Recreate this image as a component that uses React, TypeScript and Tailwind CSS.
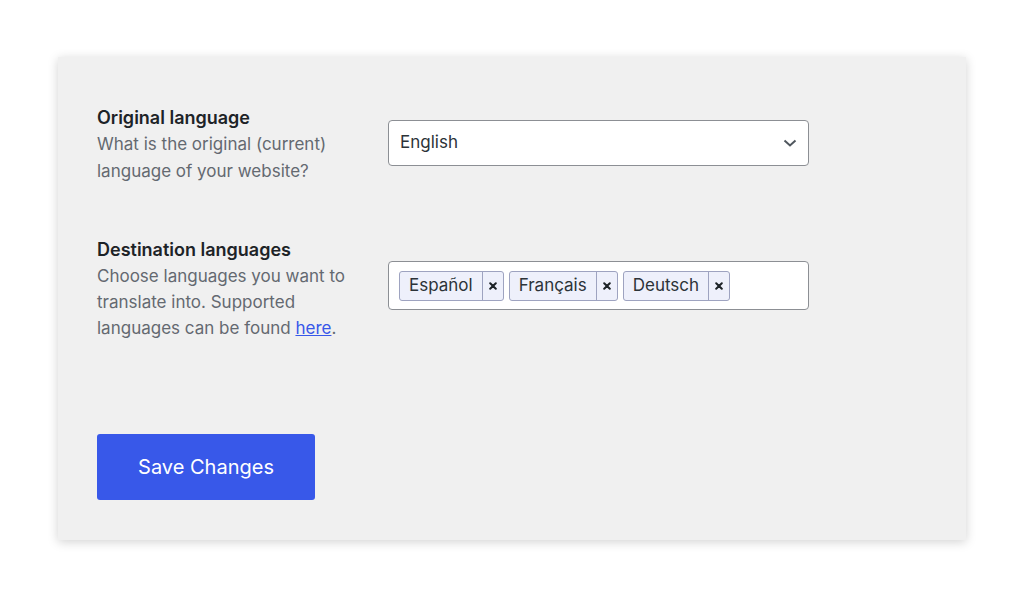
import React from "react";

function Tag({ label }: { label: string }) {
  return (
    <div className="flex h-[30px] items-stretch rounded-[3px] border border-[#9ea3c0] bg-[#eef0fb] text-[17px] text-[#2c3338]">
      <span className="flex items-center px-[9px]">{label}</span>
      <span className="flex w-[21px] items-center justify-center border-l border-[#9ea3c0]">
        <svg width="8" height="8" viewBox="0 0 8 8">
          <path d="M1.2 1.2 L6.8 6.8 M6.8 1.2 L1.2 6.8" stroke="#1d2327" strokeWidth="2" strokeLinecap="round" />
        </svg>
      </span>
    </div>
  );
}

export default function App() {
  return (
    <div className="h-[592px] w-[1024px] bg-white" style={{ fontFamily: "Inter, 'Noto Sans', sans-serif" }}>
      <div className="pl-[58px] pt-[57px]">
        <div className="h-[483px] w-[908px] bg-[#f0f0f0] pl-[39px] pt-[47px] shadow-[0_2px_10px_rgba(0,0,0,0.18)]">
          <div className="flex">
            <div className="w-[291px]">
              <div className="text-[18px] font-semibold leading-[27px] text-[#1d2327]">Original language</div>
              <div className="text-[17px] leading-[26.5px] text-[#646970]">
                What is the original (current)
                <br />
                language of your website?
              </div>
            </div>
            <div className="pt-[16px]">
              <div className="flex h-[46px] w-[421px] items-center justify-between rounded-[4px] border border-[#8c8f94] bg-white pl-[11px] pr-[10px] text-[17px] text-[#2c3338]">
                <span>English</span>
                <svg width="16" height="16" viewBox="0 0 16 16">
                  <path d="M2.5 5.5 L8 10.5 L13.5 5.5" fill="none" stroke="#50575e" strokeWidth="2" />
                </svg>
              </div>
            </div>
          </div>

          <div className="mt-[52px] flex">
            <div className="w-[291px]">
              <div className="text-[18px] font-semibold leading-[27px] text-[#1d2327]">Destination languages</div>
              <div className="text-[17px] leading-[26px] text-[#646970]">
                Choose languages you want to
                <br />
                translate into. Supported
                <br />
                languages can be found{" "}
                <a href="#" className="text-[#3858e9] underline">
                  here
                </a>
                .
              </div>
            </div>
            <div className="pt-[25px]">
              <div className="flex h-[49px] w-[421px] items-center gap-[5px] rounded-[4px] border border-[#8c8f94] bg-white pl-[10px]">
                <Tag label="Español" />
                <Tag label="Français" />
                <Tag label="Deutsch" />
              </div>
            </div>
          </div>

          <button className="mt-[93px] flex h-[66px] w-[218px] items-center justify-center rounded-[3px] bg-[#3858e9] text-[20px] text-white">
            Save Changes
          </button>
        </div>
      </div>
    </div>
  );
}
